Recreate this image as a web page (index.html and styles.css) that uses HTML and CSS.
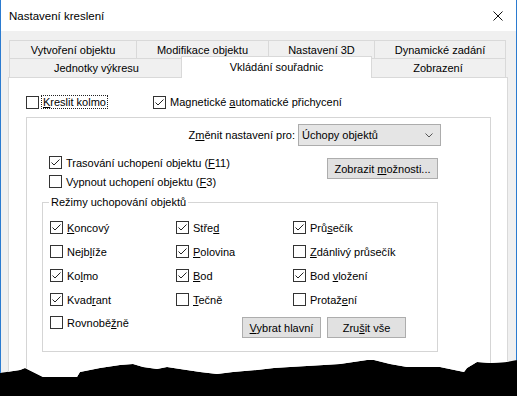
FILE: index.html
```html
<!DOCTYPE html>
<html lang="cs">
<head>
<meta charset="utf-8">
<title>Nastavení kreslení</title>
<link rel="stylesheet" href="styles.css">
</head>
<body>
<div class="window">
  <div class="titlebar">
    <span class="title">Nastavení kreslení</span>
    <svg class="close" viewBox="0 0 10 10" width="10" height="10"><path d="M0.5 0.5 L9.5 9.5 M9.5 0.5 L0.5 9.5" stroke="#111" stroke-width="1" fill="none"/></svg>
  </div>
  <div class="client">
    <div class="tabrow row1">
      <div class="tab t1">Vytvoření objektu</div>
      <div class="tab t2">Modifikace objektu</div>
      <div class="tab t3">Nastavení 3D</div>
      <div class="tab t4">Dynamické zadání</div>
    </div>
    <div class="tabrow row2">
      <div class="tab t5">Jednotky výkresu</div>
      <div class="tab t6 selected">Vkládání souřadnic</div>
      <div class="tab t7">Zobrazení</div>
    </div>
    <div class="panel">
      <div class="toprow">
        <div class="check kreslit"><span class="box"></span><span class="focus"><u>K</u>reslit kolmo</span></div>
        <div class="check"><span class="box"><svg viewBox="0 0 11 11" width="11" height="11"><path d="M1.5 5.5 L4 8 L9.5 2.5" stroke="#222" stroke-width="1" fill="none"/></svg></span><span>Magnetické <u>a</u>utomatické přichycení</span></div>
      </div>
      <div class="frame">
        <div class="changerow">
          <span>Z<u>m</u>ěnit nastavení pro:</span>
          <div class="combo"><span>Úchopy objektů</span><svg viewBox="0 0 8 5" width="8" height="5"><path d="M0.5 0.5 L4 4 L7.5 0.5" stroke="#555" stroke-width="1" fill="none"/></svg></div>
        </div>
        <div class="tracking">
          <div class="trackcol">
            <div class="check"><span class="box"><svg viewBox="0 0 11 11" width="11" height="11"><path d="M1.5 5.5 L4 8 L9.5 2.5" stroke="#222" stroke-width="1" fill="none"/></svg></span><span>Trasování uchopení objektu (<u>F</u>11)</span></div>
            <div class="check"><span class="box"></span><span>Vypnout uchopení objektu (<u>F</u>3)</span></div>
          </div>
          <div class="btn wide"><span>Zobrazit <u>m</u>ožnosti...</span></div>
        </div>
        <fieldset class="modes">
          <legend>Režimy uchopování objektů</legend>
          <div class="grid">
            <div class="check"><span class="box"><svg viewBox="0 0 11 11" width="11" height="11"><path d="M1.5 5.5 L4 8 L9.5 2.5" stroke="#222" stroke-width="1" fill="none"/></svg></span><span><u>K</u>oncový</span></div>
            <div class="check"><span class="box"><svg viewBox="0 0 11 11" width="11" height="11"><path d="M1.5 5.5 L4 8 L9.5 2.5" stroke="#222" stroke-width="1" fill="none"/></svg></span><span>Stře<u>d</u></span></div>
            <div class="check"><span class="box"><svg viewBox="0 0 11 11" width="11" height="11"><path d="M1.5 5.5 L4 8 L9.5 2.5" stroke="#222" stroke-width="1" fill="none"/></svg></span><span>Prů<u>s</u>ečík</span></div>

            <div class="check"><span class="box"></span><span>Nejb<u>l</u>íže</span></div>
            <div class="check"><span class="box"><svg viewBox="0 0 11 11" width="11" height="11"><path d="M1.5 5.5 L4 8 L9.5 2.5" stroke="#222" stroke-width="1" fill="none"/></svg></span><span><u>P</u>olovina</span></div>
            <div class="check"><span class="box"></span><span><u>Z</u>dánlivý průsečík</span></div>

            <div class="check"><span class="box"><svg viewBox="0 0 11 11" width="11" height="11"><path d="M1.5 5.5 L4 8 L9.5 2.5" stroke="#222" stroke-width="1" fill="none"/></svg></span><span>Ko<u>l</u>mo</span></div>
            <div class="check"><span class="box"><svg viewBox="0 0 11 11" width="11" height="11"><path d="M1.5 5.5 L4 8 L9.5 2.5" stroke="#222" stroke-width="1" fill="none"/></svg></span><span><u>B</u>od</span></div>
            <div class="check"><span class="box"><svg viewBox="0 0 11 11" width="11" height="11"><path d="M1.5 5.5 L4 8 L9.5 2.5" stroke="#222" stroke-width="1" fill="none"/></svg></span><span>Bod <u>v</u>ložení</span></div>

            <div class="check"><span class="box"><svg viewBox="0 0 11 11" width="11" height="11"><path d="M1.5 5.5 L4 8 L9.5 2.5" stroke="#222" stroke-width="1" fill="none"/></svg></span><span>Kvad<u>r</u>ant</span></div>
            <div class="check"><span class="box"></span><span><u>T</u>ečně</span></div>
            <div class="check"><span class="box"></span><span>Protaž<u>e</u>ní</span></div>

            <div class="check"><span class="box"></span><span>Rovnobě<u>ž</u>ně</span></div>
            <div class="btnrow">
              <div class="btn small"><span><u>V</u>ybrat hlavní</span></div>
              <div class="btn small"><span>Zru<u>š</u>it vše</span></div>
            </div>
          </div>
        </fieldset>
      </div>
    </div>
  </div>
</div>
</body>
</html>
```
FILE: styles.css
```css
* { box-sizing: border-box; }

body {
  margin: 0;
  background: #000;
  font-family: "Liberation Sans", Arial, sans-serif;
  font-size: 11px;
  line-height: 14px;
  color: #000;
}

u { text-underline-offset: 1px; }

.window {
  width: 517px;
  height: 396px;
  background: #f0f0f0;
  border-left: 1px solid #2b7bd0;
  border-right: 1px solid #2b7bd0;
  overflow: hidden;
  clip-path: polygon(0 0, 517px 0, 517px 360px, 507px 362px, 490px 363px, 477px 362px, 467px 368px, 464px 372px, 440px 367px, 407px 367px, 390px 364px, 374px 360px, 367px 360px, 340px 364px, 324px 365px, 290px 367px, 274px 368px, 257px 370px, 233px 372px, 217px 374px, 200px 372px, 180px 369px, 167px 367px, 157px 369px, 143px 367px, 133px 364px, 120px 365px, 100px 368px, 80px 372px, 77px 377px, 43px 377px, 25px 368px, 20px 370px, 0 373px);
}

.titlebar {
  height: 31px;
  background: #fff;
  display: flex;
  align-items: center;
  justify-content: space-between;
  padding-left: 8px;
}

.title { font-size: 11.5px; }

.close { margin-right: 13px; }

.client { padding: 9px 0 0 7px; }

.tabrow { display: flex; margin-left: 1px; }
.row1 { height: 18px; }
.row2 { height: 19px; align-items: flex-end; }

.tab {
  height: 100%;
  border: 1px solid #d9d9d9;
  border-bottom: none;
  border-right: none;
  background: #f0f0f0;
  display: flex;
  align-items: center;
  justify-content: center;
  flex: none;
}
.tab:last-child { border-right: 1px solid #d9d9d9; }

.t1 { width: 127px; }
.t2 { width: 132px; }
.t3 { width: 106px; }
.t4 { width: 132px; }
.t5 { width: 174px; }
.t6 { width: 191px; }
.t7 { width: 136px; }

.tab.selected {
  height: 22px;
  margin: 0 -2px -1px -2px;
  background: #fff;
  border-right: 1px solid #d9d9d9;
  position: relative;
  z-index: 1;
  padding-bottom: 1px;
}

.panel {
  width: 500px;
  height: 320px;
  background: #fff;
  border: 1px solid #d9d9d9;
  padding: 17px 0 0 17px;
}

.toprow {
  display: flex;
  align-items: center;
  height: 14px;
}

.check {
  display: flex;
  align-items: center;
  height: 13px;
  white-space: nowrap;
}

.box {
  width: 13px;
  height: 13px;
  border: 1px solid #333;
  background: #fff;
  margin-right: 4px;
  flex: none;
  display: flex;
}

.kreslit { width: 127px; }
.kreslit .box { margin-right: 2px; }

.focus {
  border: 1px dotted #222;
  padding: 0 1px;
  line-height: 12px;
}

.frame {
  width: 465px;
  height: 290px;
  border: 1px solid #d5d5d5;
  margin-top: 8px;
  padding: 6px 0 0 0;
}

.changerow {
  display: flex;
  justify-content: flex-end;
  align-items: center;
  height: 22px;
  padding-right: 49px;
}

.combo {
  width: 143px;
  height: 22px;
  margin-left: 3px;
  border: 1px solid #acacac;
  background: #e5e5e5;
  display: flex;
  align-items: center;
  justify-content: space-between;
  padding: 0 7px 0 3px;
}

.tracking {
  display: flex;
  justify-content: space-between;
  align-items: flex-start;
  margin-top: 10px;
  padding: 0 52px 0 22px;
}

.trackcol {
  display: flex;
  flex-direction: column;
  gap: 6px;
}

.btn {
  height: 21px;
  border: 1px solid #adadad;
  background: #e1e1e1;
  display: flex;
  align-items: center;
  justify-content: center;
  white-space: nowrap;
}
.btn.wide { width: 111px; margin-top: 2px; }
.btn.small { width: 79px; }

.modes {
  margin: 7px 0 0 15px;
  width: 396px;
  min-width: 0;
  border: 1px solid #d5d5d5;
  padding: 0 0 13px 7px;
}

.modes legend {
  padding: 0 2px;
  margin-left: -1px;
  line-height: 14px;
}

.grid {
  display: grid;
  grid-template-columns: 126px 117px 1fr;
  grid-template-rows: 24px 24px 24px 23px auto;
  align-items: start;
  padding-top: 12px;
}

.btnrow {
  grid-column: 2 / 4;
  display: flex;
  gap: 6px;
  margin: 1px 0 0 66px;
}
```
